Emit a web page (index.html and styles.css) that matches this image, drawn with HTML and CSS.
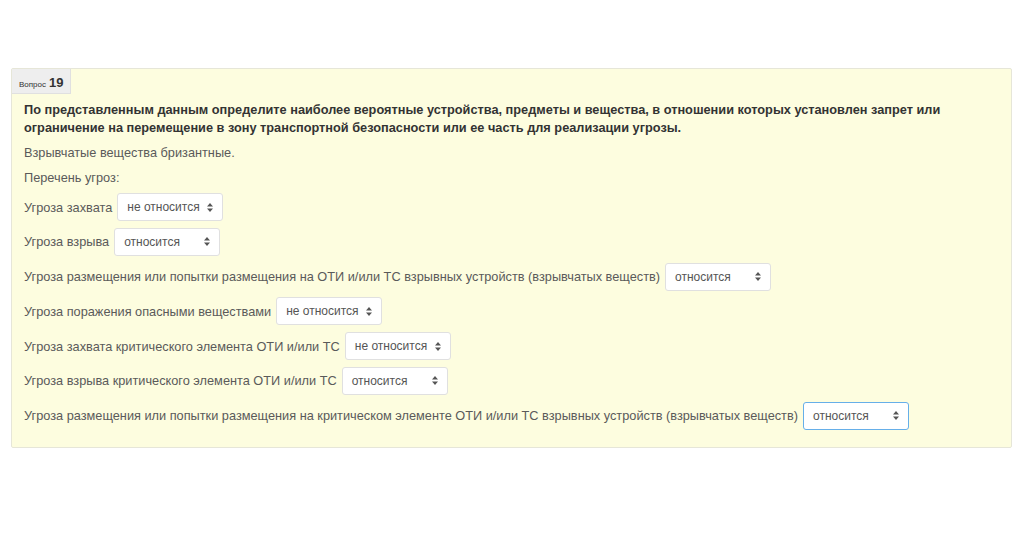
FILE: index.html
```html
<!DOCTYPE html>
<html lang="ru">
<head>
<meta charset="utf-8">
<title>Вопрос 19</title>
<link rel="stylesheet" href="styles.css">
</head>
<body>
<div class="que">
  <div class="info"><span class="qword">Вопрос</span> <span class="qno">19</span></div>
  <div class="content">
    <p class="qtext">По представленным данным определите наиболее вероятные устройства, предметы и вещества, в отношении которых установлен запрет или ограничение на перемещение в зону транспортной безопасности или ее часть для реализации угрозы.</p>
    <p class="para">Взрывчатые вещества бризантные.</p>
    <p class="para">Перечень угроз:</p>
    <div class="rows">
      <div class="row"><span class="lbl">Угроза захвата</span><div class="sel"><span>не относится</span><svg width="6" height="9" viewBox="0 0 6 9"><path d="M3 0L6 3.5H0Z M3 9L0 5.5H6Z" fill="#555"/></svg></div></div>
      <div class="row"><span class="lbl">Угроза взрыва</span><div class="sel"><span>относится</span><svg width="6" height="9" viewBox="0 0 6 9"><path d="M3 0L6 3.5H0Z M3 9L0 5.5H6Z" fill="#555"/></svg></div></div>
      <div class="row"><span class="lbl">Угроза размещения или попытки размещения на ОТИ и/или ТС взрывных устройств (взрывчатых веществ)</span><div class="sel"><span>относится</span><svg width="6" height="9" viewBox="0 0 6 9"><path d="M3 0L6 3.5H0Z M3 9L0 5.5H6Z" fill="#555"/></svg></div></div>
      <div class="row"><span class="lbl">Угроза поражения опасными веществами</span><div class="sel"><span>не относится</span><svg width="6" height="9" viewBox="0 0 6 9"><path d="M3 0L6 3.5H0Z M3 9L0 5.5H6Z" fill="#555"/></svg></div></div>
      <div class="row"><span class="lbl">Угроза захвата критического элемента ОТИ и/или ТС</span><div class="sel"><span>не относится</span><svg width="6" height="9" viewBox="0 0 6 9"><path d="M3 0L6 3.5H0Z M3 9L0 5.5H6Z" fill="#555"/></svg></div></div>
      <div class="row"><span class="lbl">Угроза взрыва критического элемента ОТИ и/или ТС</span><div class="sel"><span>относится</span><svg width="6" height="9" viewBox="0 0 6 9"><path d="M3 0L6 3.5H0Z M3 9L0 5.5H6Z" fill="#555"/></svg></div></div>
      <div class="row"><span class="lbl">Угроза размещения или попытки размещения на критическом элементе ОТИ и/или ТС взрывных устройств (взрывчатых веществ)</span><div class="sel focus"><span>относится</span><svg width="6" height="9" viewBox="0 0 6 9"><path d="M3 0L6 3.5H0Z M3 9L0 5.5H6Z" fill="#555"/></svg></div></div>
    </div>
  </div>
</div>
</body>
</html>
```

FILE: styles.css
```css
html, body {
  margin: 0;
  padding: 0;
  background: #ffffff;
}
body {
  font-family: "Liberation Sans", Arial, sans-serif;
  font-size: 12.75px;
  color: #5a5a5a;
  padding-top: 68px;
}
.que {
  margin-left: 11px;
  width: 1001px;
  background: #fdfddf;
  border: 1px solid #e6e6d8;
  border-radius: 2px;
  box-sizing: border-box;
  padding-bottom: 17px;
}
.info {
  display: inline-flex;
  align-items: baseline;
  gap: 3px;
  height: 25px;
  box-sizing: border-box;
  padding: 6px 7px 0 7px;
  background: #eeeeee;
  border-right: 1px solid #e0e0e0;
  border-bottom: 1px solid #e0e0e0;
  color: #333;
}
.qword {
  font-size: 8px;
}
.qno {
  font-size: 13px;
  font-weight: bold;
}
.content {
  padding: 0 12px;
}
.qtext {
  margin: 7px 0 0 0;
  font-weight: bold;
  color: #333;
  line-height: 18px;
}
.para {
  margin: 7px 0 0 0;
  line-height: 18px;
}
.rows {
  display: flex;
  flex-direction: column;
  gap: 6.8px;
  margin-top: 6px;
}
.row {
  display: flex;
  align-items: center;
  gap: 5px;
}
.sel {
  width: 106px;
  height: 28px;
  box-sizing: border-box;
  display: flex;
  align-items: center;
  justify-content: space-between;
  padding: 0 9px 0 9px;
  background: #fff;
  border: 1px solid #e0e0e0;
  border-radius: 3px;
  font-size: 12px;
  color: #555;
}
.sel.focus {
  border-color: #66afe9;
}
```
